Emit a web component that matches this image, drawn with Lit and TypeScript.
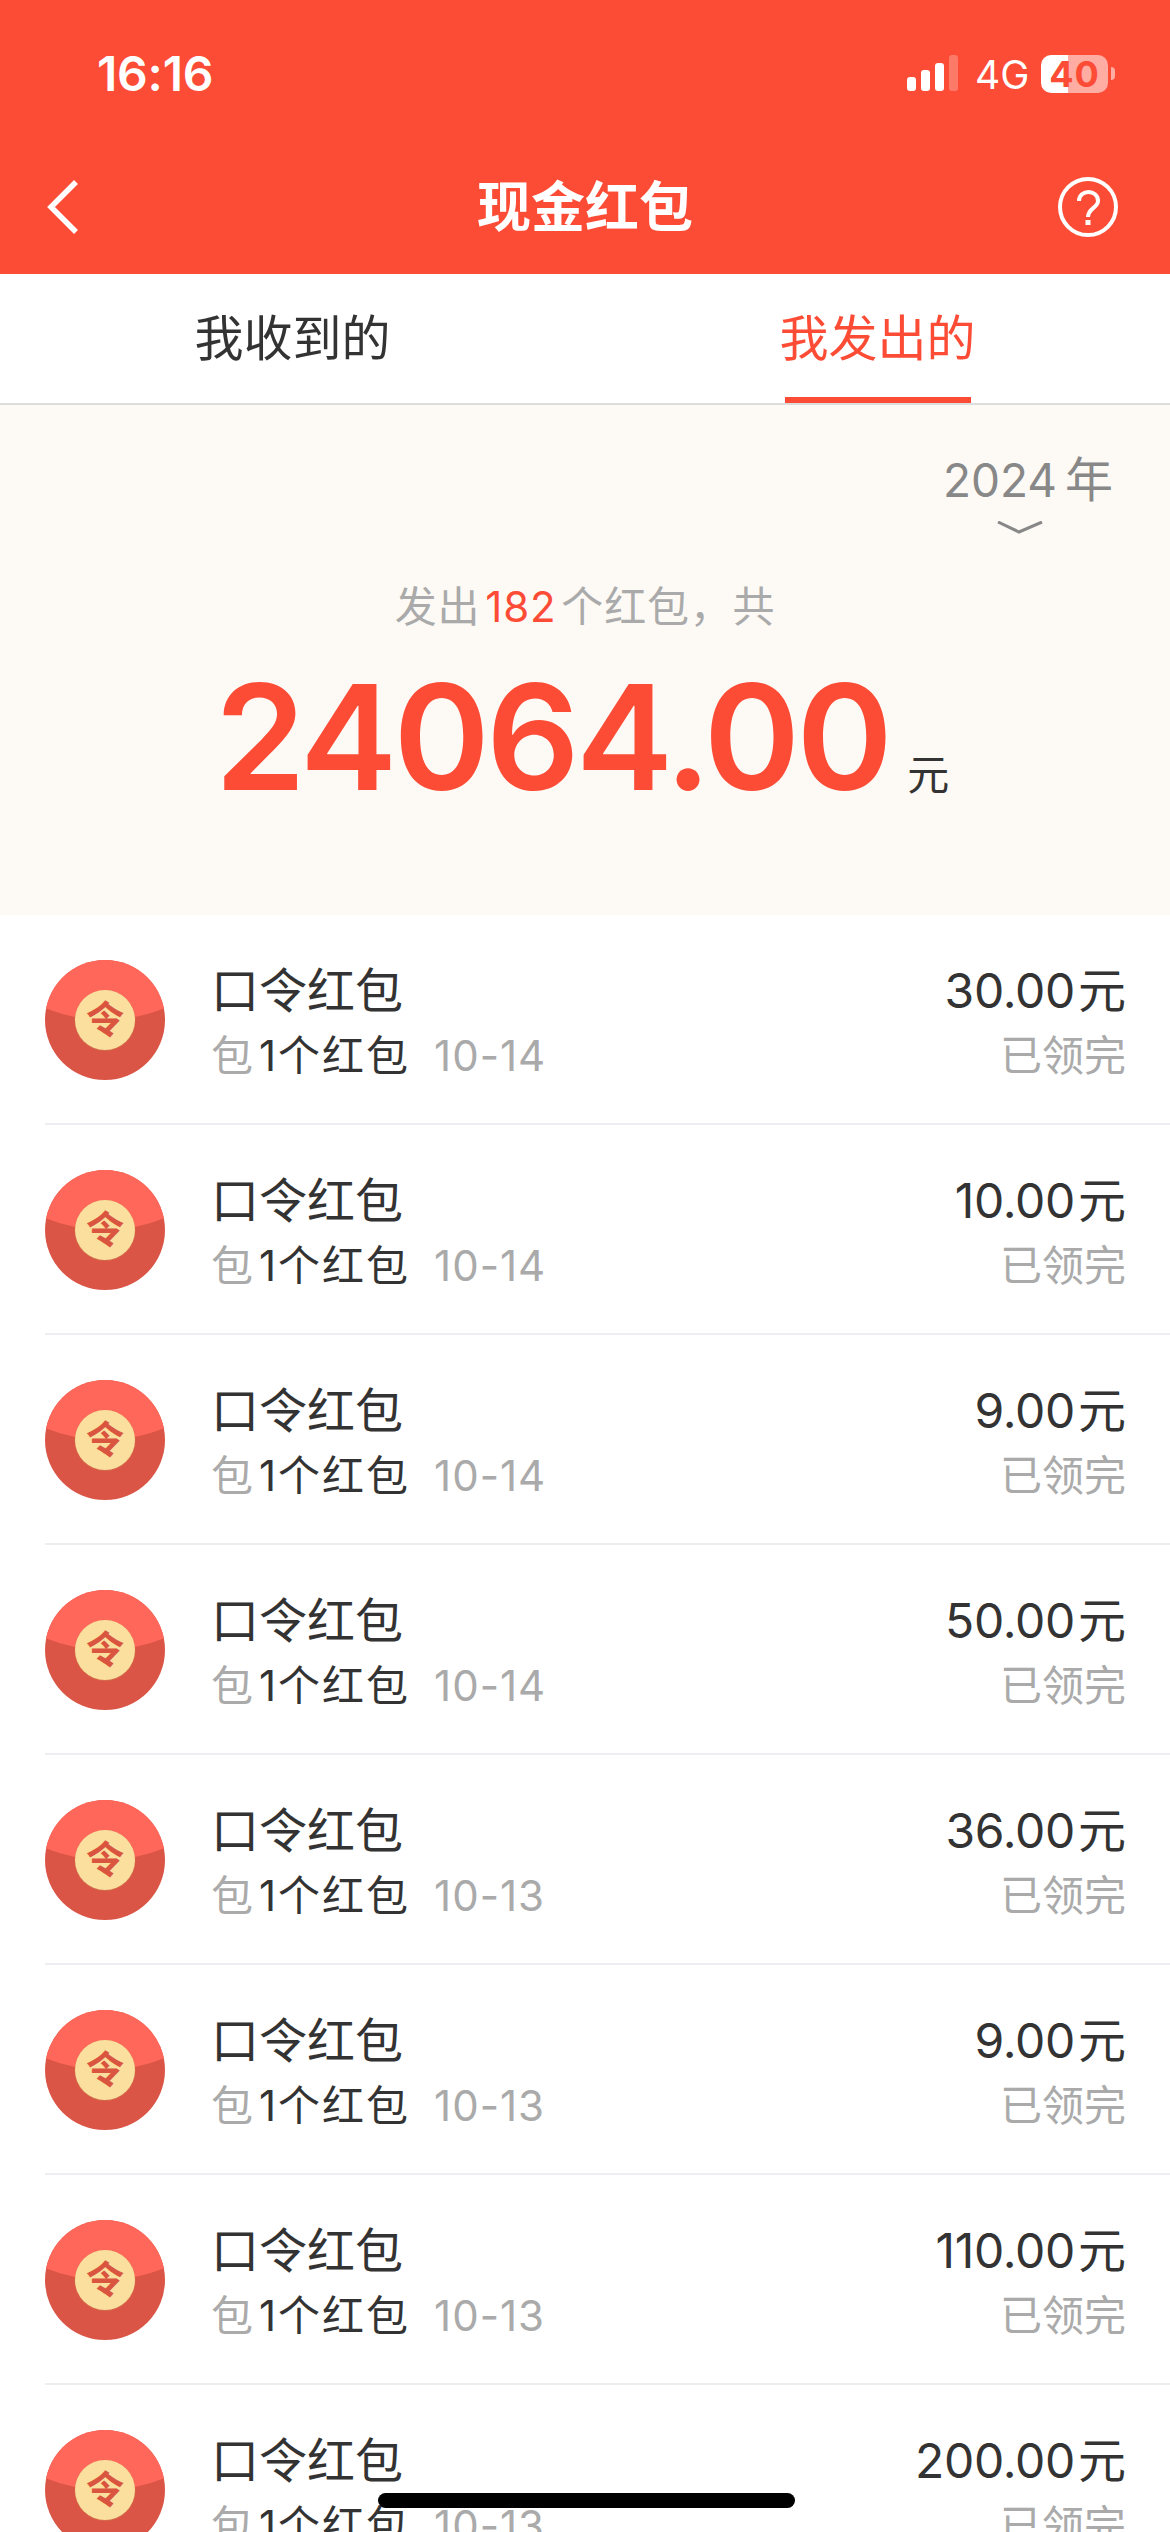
import { LitElement, html, css, svg } from "lit";
import { customElement } from "lit/decorators.js";

const rows = [
  ["10-14", "30.00"], ["10-14", "10.00"], ["10-14", "9.00"], ["10-14", "50.00"],
  ["10-13", "36.00"], ["10-13", "9.00"], ["10-13", "110.00"], ["10-13", "200.00"],
];

@customElement("app-root")
export class AppRoot extends LitElement {
  static styles = css`
    :host { display: block; position: relative; width: 1170px; height: 2532px; overflow: hidden; background: #fff; color: #333;
      font-family: Inter, "Noto Sans CJK SC", sans-serif; }
    .top { background: #fc4c36; color: #fff; height: 274px; display: flex; flex-direction: column; }
    .status { height: 150px; flex: none; box-sizing: border-box; padding: 0 62px 0 97px; display: flex; justify-content: space-between; align-items: flex-start; }
    .time { font-size: 48px; font-weight: 600; line-height: 50px; margin-top: 49px; letter-spacing: -0.2px; }
    .sys { display: flex; align-items: flex-start; margin-top: 55px; }
    .sig { display: block; width: 52px; height: 36px; }
    .net { font-size: 39px; line-height: 36px; margin: 2px 0 0 16px; width: 66px; }
    .bat { position: relative; width: 67px; height: 38px; border-radius: 10px; background: linear-gradient(90deg, #fff 40%, #ffaca2 40%); color: #fc4c36;
      font-size: 36px; font-weight: 700; line-height: 38px; text-align: center; letter-spacing: 1px; }
    .bat::after { content: ""; position: absolute; left: 70px; top: 12px; width: 4px; height: 13px; border-radius: 0 7px 7px 0; background: #ffaca2; }
    .nav { height: 124px; display: flex; align-items: center; justify-content: space-between; padding: 0 52px 10px 46px; box-sizing: border-box; position: relative; }
    .nav h1 { margin: 0; font-size: 54px; line-height: 60px; font-weight: 700; position: absolute; left: 0; right: 0; top: 28px; text-align: center; }
    .tabs { height: 129px; display: flex; border-bottom: 2px solid #ddd; font-size: 49px; }
    .tab { width: 585px; box-sizing: border-box; display: flex; justify-content: center; }
    .tab span { display: block; width: 186px; white-space: nowrap; height: 129px; box-sizing: border-box; line-height: 48px; padding-top: 41px; }
    .tab.on { color: #fc4c36; }
    .tab.on span { border-bottom: 6px solid #fc4c36; text-indent: -5px; }
    .tab.first span { text-indent: -2px; }
    .tab.first { padding-right: 6px; }
    .sum { height: 510px; background: #fdfaf6; display: flex; flex-direction: column; box-sizing: border-box; padding-top: 51px; }
    .year { align-self: flex-end; margin-right: 59px; font-size: 48px; line-height: 48px; color: #888; display: flex; flex-direction: column; align-items: center; width: 166px; white-space: nowrap; }
    .year b { font-weight: 400; font-size: 46px; margin-right: 8px; }
    .chev { display: block; width: 46px; height: 14px; margin: 17px 16px 0 0; }
    .cnt { margin-top: 47px; text-align: center; font-size: 42px; line-height: 50px; color: #aaa; letter-spacing: 0.8px; }
    .cnt b { font-weight: 400; color: #fc4c36; margin: 0 5px; }
    .total { display: flex; align-items: baseline; justify-content: center; margin-top: 15px; padding-right: 6px; }
    .num { font-size: 146px; font-weight: 600; line-height: 180px; color: #fc4c36; letter-spacing: -3.6px; }
    .unit { font-size: 42px; margin-left: 18px; color: #333; }
    .row { height: 210px; box-sizing: border-box; margin-left: 45px; padding-right: 44px; display: flex; align-items: center; border-bottom: 2px solid #eeeef2; }
    .icon { display: block; width: 120px; height: 120px; flex: none; margin-right: 46px; margin-top: 2px; }
    .icon text { font-family: "Noto Sans CJK SC", sans-serif; font-size: 38px; font-weight: 700; fill: #d9553f; text-anchor: middle; }
    .col { display: flex; flex-direction: column; margin-top: 7px; }
    .right { margin-left: auto; text-align: right; }
    .l1 { font-size: 48px; line-height: 66px; white-space: nowrap; }
    .l1 .amt { letter-spacing: -0.3px; }
    .l1 i { font-style: normal; margin-left: 3px; }
    .l2 { font-size: 42px; line-height: 64px; color: #aaa; white-space: nowrap; }
    .l2 .d { color: #333; margin-left: 6px; letter-spacing: 2px; }
    .l2 .date { margin-left: 24px; letter-spacing: 1px; }
    .home { position: absolute; left: 378px; top: 2493px; width: 417px; height: 15px; border-radius: 8px; background: #000; }
  `;

  render() {
    return html`
      <div class="top">
        <div class="status">
          <div class="time">16:16</div>
          <div class="sys">
            <svg class="sig" viewBox="0 0 52 36">
              <rect x="0" y="22" width="9" height="14" rx="3" fill="#fff" />
              <rect x="14" y="15" width="9" height="21" rx="3" fill="#fff" />
              <rect x="28" y="8" width="9" height="28" rx="3" fill="#fff" />
              <rect x="42" y="0" width="9" height="36" rx="3" fill="#fff" opacity=".25" />
            </svg>
            <div class="net">4G</div>
            <div class="bat">40</div>
          </div>
        </div>
        <div class="nav">
          <svg width="32" height="54" viewBox="0 0 32 54" fill="none" stroke="#fff" stroke-width="5.5" stroke-linejoin="miter">
            <path d="M30 2 L5 27 L30 52" />
          </svg>
          <h1>现金红包</h1>
          <svg width="60" height="60" viewBox="0 0 60 60" fill="none" stroke="#fff">
            <circle cx="30" cy="30" r="28" stroke-width="4" />
            <path d="M21 24 C21 12 40 12 40 24 C40 31 30 31 30 40" stroke-width="4" />
            <rect x="27.5" y="43" width="5" height="5" fill="#fff" stroke="none" />
          </svg>
        </div>
      </div>
      <div class="tabs">
        <div class="tab first"><span>我收到的</span></div>
        <div class="tab on"><span>我发出的</span></div>
      </div>
      <div class="sum">
        <div class="year">
          <span><b>2024</b>年</span>
          <svg class="chev" viewBox="0 0 46 14" fill="none" stroke="#888" stroke-width="3"><path d="M1 1 L22 11 L45 1" /></svg>
        </div>
        <div class="cnt">发出<b>182</b>个红包，共</div>
        <div class="total"><span class="num">24064.00</span><span class="unit">元</span></div>
      </div>
      ${rows.map(([date, amt]) => html`
        <div class="row">
          <svg class="icon" viewBox="0 0 120 120">
            <defs><clipPath id="c"><circle cx="60" cy="60" r="60" /></clipPath></defs>
            <g clip-path="url(#c)">
              <rect width="120" height="120" fill="#da5546" />
              <path d="M0 0 H120 V48 Q60 72 0 48 Z" fill="#fe675a" />
            </g>
            <circle cx="60" cy="60.5" r="30.5" fill="#cf7d50" opacity=".55" />
            <circle cx="60" cy="60" r="30" fill="#fadf9e" />
            ${svg`<text x="60" y="73">令</text>`}
          </svg>
          <div class="col">
            <div class="l1">口令红包</div>
            <div class="l2">包<span class="d">1个红包</span><span class="date">${date}</span></div>
          </div>
          <div class="col right">
            <div class="l1"><span class="amt">${amt}</span><i>元</i></div>
            <div class="l2">已领完</div>
          </div>
        </div>`)}
      <div class="home"></div>
    `;
  }
}
